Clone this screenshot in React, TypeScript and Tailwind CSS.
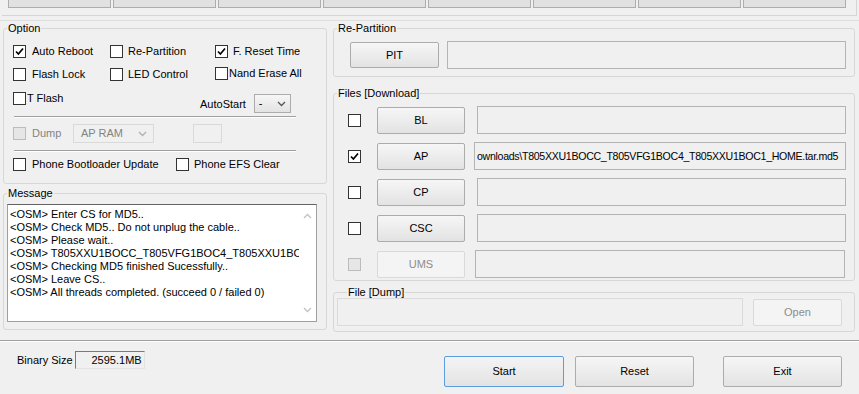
import React from 'react'

function Check({ checked = false, disabled = false }: { checked?: boolean; disabled?: boolean }) {
  return (
    <div
      className={
        'w-[13px] h-[13px] shrink-0 border flex items-center justify-center ' +
        (disabled ? 'border-[#bcbcbc] bg-[#e6e6e6]' : 'border-[#333333] bg-white')
      }
    >
      {checked && (
        <svg width="9" height="9" viewBox="0 0 9 9">
          <path d="M1 4.5 L3.4 7 L8 1.5" fill="none" stroke="#000" strokeWidth="1.7" />
        </svg>
      )}
    </div>
  )
}

function Chevron({ color = '#555' }: { color?: string }) {
  return (
    <svg width="9" height="6" viewBox="0 0 9 6">
      <path d="M1 1 L4.5 4.5 L8 1" fill="none" stroke={color} strokeWidth="1.3" />
    </svg>
  )
}

function Btn({ label, disabled = false, className = '' }: { label: string; disabled?: boolean; className?: string }) {
  return (
    <div
      className={
        'flex items-center justify-center rounded-[2px] border ' +
        (disabled
          ? 'border-[#d9d9d9] bg-[#f4f4f4] text-[#8d8d8d] '
          : 'border-[#acacac] bg-linear-to-b from-[#f6f6f6] to-[#e3e3e3] text-black ') +
        className
      }
    >
      {label}
    </div>
  )
}

function Field({ className = '', children }: { className?: string; children?: React.ReactNode }) {
  return (
    <div className={'border border-[#b4b4b4] bg-[#f0f0f0] overflow-hidden flex items-center ' + className}>
      {children}
    </div>
  )
}

function Sep({ className = '' }: { className?: string }) {
  return <div className={'border-t border-t-[#a0a0a0] border-b border-b-white ' + className} />
}

const log = [
  '<OSM> Enter CS for MD5..',
  '<OSM> Check MD5.. Do not unplug the cable..',
  '<OSM> Please wait..',
  '<OSM> T805XXU1BOCC_T805VFG1BOC4_T805XXU1BOC1_HOME.tar.md5 is valid.',
  '<OSM> Checking MD5 finished Sucessfully..',
  '<OSM> Leave CS..',
  '<OSM> All threads completed. (succeed 0 / failed 0)',
]

export default function App() {
  const fs = 'border border-[#d7d7d7] rounded-[3px]'
  const lg = 'ml-[3px] px-[1px] leading-[13px]'
  const files = [
    { name: 'BL', checked: false },
    { name: 'AP', checked: true, path: 'ownloads\\T805XXU1BOCC_T805VFG1BOC4_T805XXU1BOC1_HOME.tar.md5' },
    { name: 'CP', checked: false },
    { name: 'CSC', checked: false },
    { name: 'UMS', checked: false, disabled: true },
  ]

  return (
    <div className="w-[859px] h-[394px] overflow-hidden bg-[#f0f0f0] text-[11px] leading-[13px] text-black font-['Liberation_Sans',Arial,sans-serif] flex flex-col">
      {/* top tab strip (cut off) */}
      <div className="h-[21px] shrink-0 border-b border-b-[#dedede]">
        <div className="mx-[2px] h-[16px] border-b border-r border-[#d5d5d5] pl-[6px] flex gap-[2px]">
          {[0, 1, 2, 3, 4, 5, 6, 7].map((i) => (
            <div key={i} className="w-[103px] h-[8px] border-x border-b border-[#adadad] bg-[#e1e1e1]" />
          ))}
        </div>
      </div>

      {/* main area */}
      <div className="h-[319px] shrink-0 flex">
        {/* left column */}
        <div className="ml-[3px] w-[324px] flex flex-col">
          <fieldset className={'mt-[1px] h-[162px] ' + fs}>
            <legend className={lg}>Option</legend>
            <div className="pl-[9px]">
              <div className="mt-[10px] flex items-center h-[13px]">
                <div className="w-[97px] flex items-center gap-[6px]"><Check checked />Auto Reboot</div>
                <div className="w-[105px] flex items-center gap-[5px]"><Check />Re-Partition</div>
                <div className="flex items-center gap-[5px]"><Check checked />F. Reset Time</div>
              </div>
              <div className="mt-[10px] flex items-center h-[13px]">
                <div className="w-[97px] flex items-center gap-[6px]"><Check />Flash Lock</div>
                <div className="w-[105px] flex items-center gap-[5px]"><Check />LED Control</div>
                <div className="-mt-[3px] flex items-center gap-[1px]"><Check />Nand Erase All</div>
              </div>
              <div className="mt-[11px] h-[21px] flex">
                <div className="w-[187px] self-start flex items-center gap-[1px]"><Check />T Flash</div>
                <div className="self-end flex items-center">
                  <span className="pt-[2px]">AutoStart</span>
                  <div className="ml-[8px] w-[37px] h-[19px] border border-[#acacac] bg-linear-to-b from-[#f6f6f6] to-[#e3e3e3] flex items-center justify-between pl-[4px] pr-[4px]">
                    <span>-</span>
                    <Chevron />
                  </div>
                </div>
              </div>
              <Sep className="mt-[3px] ml-[1px] w-[282px]" />
              <div className="mt-[6px] h-[19px] flex items-center text-[#838383]">
                <div className="w-[60px] flex items-center gap-[6px]"><Check disabled />Dump</div>
                <div className="w-[81px] h-[19px] border border-[#d9d9d9] bg-[#f0f0f0] flex items-center justify-between pl-[7px] pr-[6px]">
                  <span>AP RAM</span>
                  <Chevron color="#b0b0b0" />
                </div>
                <div className="ml-[39px] w-[29px] h-[19px] border border-[#d9d9d9] bg-[#f0f0f0]" />
              </div>
              <Sep className="mt-[7px] ml-[1px] w-[282px]" />
              <div className="mt-[6px] flex items-center h-[13px]">
                <div className="w-[163px] flex items-center gap-[6px]"><Check />Phone Bootloader Update</div>
                <div className="flex items-center gap-[5px]"><Check />Phone EFS Clear</div>
              </div>
            </div>
          </fieldset>

          <fieldset className={'mt-[3px] h-[143px] ' + fs}>
            <legend className={lg}>Message</legend>
            <div className="mt-[4px] ml-[3px] w-[310px] h-[118px] border border-[#a0a0a0] border-t-[#646464] bg-white flex">
              <div className="flex-1 overflow-hidden pl-[2px] pt-[3px] whitespace-nowrap">
                {log.map((l, i) => (
                  <div key={i}>{l}</div>
                ))}
              </div>
              <div className="w-[17px] flex flex-col items-center justify-between py-[8px]">
                <svg width="9" height="6" viewBox="0 0 9 6">
                  <path d="M1 5 L4.5 1.5 L8 5" fill="none" stroke="#c2c2c2" strokeWidth="1.3" />
                </svg>
                <Chevron color="#c2c2c2" />
              </div>
            </div>
          </fieldset>
        </div>

        {/* right column */}
        <div className="ml-[6px] w-[522px] flex flex-col">
          <fieldset className={'mt-[1px] h-[55px] ' + fs}>
            <legend className={lg}>Re-Partition</legend>
            <div className="mt-[6px] h-[28px] flex items-center">
              <Btn label="PIT" className="ml-[16px] w-[89px] h-[26px]" />
              <Field className="ml-[8px] w-[399px] h-[28px]" />
            </div>
          </fieldset>

          <fieldset className={'mt-[10px] h-[194px] ' + fs}>
            <legend className={lg}>Files [Download]</legend>
            <div className="mt-[6px] flex flex-col gap-[8px]">
              {files.map((f) => (
                <div key={f.name} className="h-[28px] flex items-center">
                  <div className="ml-[14px]"><Check checked={f.checked} disabled={f.disabled} /></div>
                  <Btn label={f.name} disabled={f.disabled} className="ml-[16px] w-[88px] h-[27px]" />
                  <Field
                    className={
                      (f.name === 'AP' ? 'ml-[9px] w-[372px] ' : f.name === 'UMS' ? 'ml-[10px] w-[370px] ' : 'ml-[12px] w-[369px] ') +
                      'h-[28px]'
                    }
                  >
                    {f.path && (
                      <span className="whitespace-nowrap pl-[2px] text-[10.6px] tracking-[-0.3px]">{f.path}</span>
                    )}
                  </Field>
                </div>
              ))}
            </div>
          </fieldset>

          <fieldset className={'mt-[5px] h-[46px] ' + fs}>
            <legend className={'ml-[13px] px-[1px] leading-[13px]'}>File [Dump]</legend>
            <div className="-mt-[1px] flex items-center">
              <div className="ml-[3px] w-[406px] h-[28px] border border-[#dadada] bg-[#f0f0f0]" />
              <Btn label="Open" disabled className="ml-[10px] w-[89px] h-[27px]" />
            </div>
          </fieldset>
        </div>
      </div>

      <Sep className="w-full" />

      {/* bottom bar */}
      <div className="flex">
        <div className="w-[444px] shrink-0 pl-[17px] pt-[9px]">
          <div className="flex items-center">
            <span>Binary Size</span>
            <div className="ml-[2px] w-[70px] h-[18px] border border-t-[#7a7a7a] border-l-[#7a7a7a] border-b-[#e3e3e3] border-r-[#e3e3e3] flex items-center justify-end pr-[2px]">
              2595.1MB
            </div>
          </div>
        </div>
        <div className="mt-[14px] w-[120px] h-[31px] rounded-[2px] border border-[#5a9ee0] bg-linear-to-b from-[#f4f4f4] to-[#e3e3e3] flex items-center justify-center">
          Start
        </div>
        <Btn label="Reset" className="mt-[14px] ml-[11px] w-[119px] h-[31px]" />
        <Btn label="Exit" className="mt-[14px] ml-[29px] w-[119px] h-[31px]" />
      </div>
    </div>
  )
}
